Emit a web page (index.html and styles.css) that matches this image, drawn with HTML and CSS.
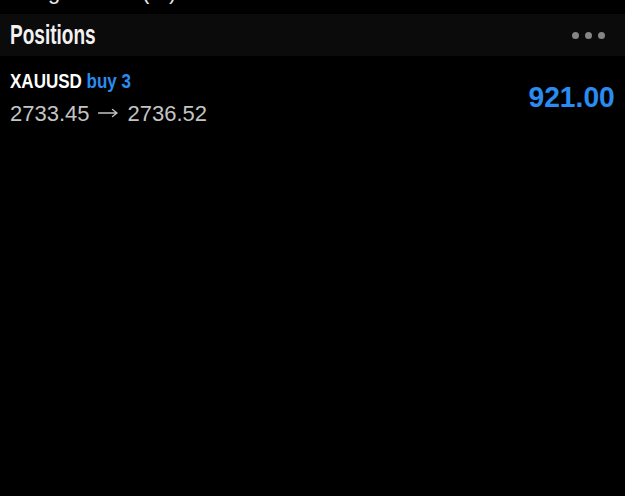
FILE: index.html
```html
<!DOCTYPE html>
<html>
<head>
<meta charset="utf-8">
<link rel="stylesheet" href="styles.css">
</head>
<body>
<div class="app">
  <div class="prev-line"><div class="prev-text">Margin Level (%)</div></div>
  <div class="section-header">
    <span class="cond title">Positions</span>
    <span class="more"><i></i><i></i><i></i></span>
  </div>
  <div class="position">
    <div class="pos-info">
      <div class="pos-name"><span class="cond name"><span class="symbol">XAUUSD</span> <span class="side">buy 3</span></span></div>
      <div class="pos-prices">2733.45<svg class="arrow" width="20" height="10" viewBox="0 0 20 10"><path d="M0.5 5H19M14.5 1.5L19 5L14.5 8.5" fill="none" stroke="#c4c4c4" stroke-width="1.3" stroke-linecap="round" stroke-linejoin="round"/></svg>2736.52</div>
    </div>
    <div class="pos-profit"><span class="cond profit">921.00</span></div>
  </div>
</div>
</body>
</html>
```
FILE: styles.css
```css
html, body {
  margin: 0;
  padding: 0;
  background: #000;
}
.app {
  width: 625px;
  height: 496px;
  overflow: hidden;
  background: #000;
  font-family: "Liberation Sans", Arial, sans-serif;
  color: #fff;
}
.prev-line {
  height: 14px;
  overflow: hidden;
  padding-left: 10px;
}
.prev-text {
  margin-top: -19px;
  font-size: 22px;
  line-height: 22px;
  color: #e8e8e8;
  white-space: nowrap;
}
.section-header {
  height: 42px;
  background: #0b0b0b;
  display: flex;
  align-items: center;
  justify-content: space-between;
  padding: 0 10px;
}
.cond {
  display: inline-block;
  font-family: "Liberation Sans", Arial, sans-serif;
  font-weight: bold;
  transform-origin: left center;
  white-space: nowrap;
}
.title {
  font-size: 28px;
  color: #f2f2f2;
  transform: scaleX(0.68);
}
.more {
  display: flex;
  gap: 6px;
  padding-right: 10px;
}
.more i {
  width: 7px;
  height: 7px;
  border-radius: 50%;
  background: #858585;
}
.position {
  display: flex;
  justify-content: space-between;
  align-items: flex-start;
  padding: 12px 10px 0 10px;
}
.pos-name {
  font-size: 21px;
  line-height: 26px;
}
.name {
  transform: scaleX(0.81);
}
.symbol { color: #fff; }
.side { color: #2a8cf0; }
.pos-prices {
  margin-top: 5px;
  font-size: 22px;
  line-height: 30px;
  color: #c4c4c4;
  display: flex;
  align-items: center;
  white-space: nowrap;
}
.arrow {
  margin: 0 10px 2px 8px;
}
.pos-profit {
  display: flex;
  justify-content: flex-end;
  margin-top: 14px;
}
.profit {
  font-size: 30px;
  line-height: 29px;
  color: #2a8cf0;
  transform: scaleX(0.94);
  transform-origin: right center;
}
```
